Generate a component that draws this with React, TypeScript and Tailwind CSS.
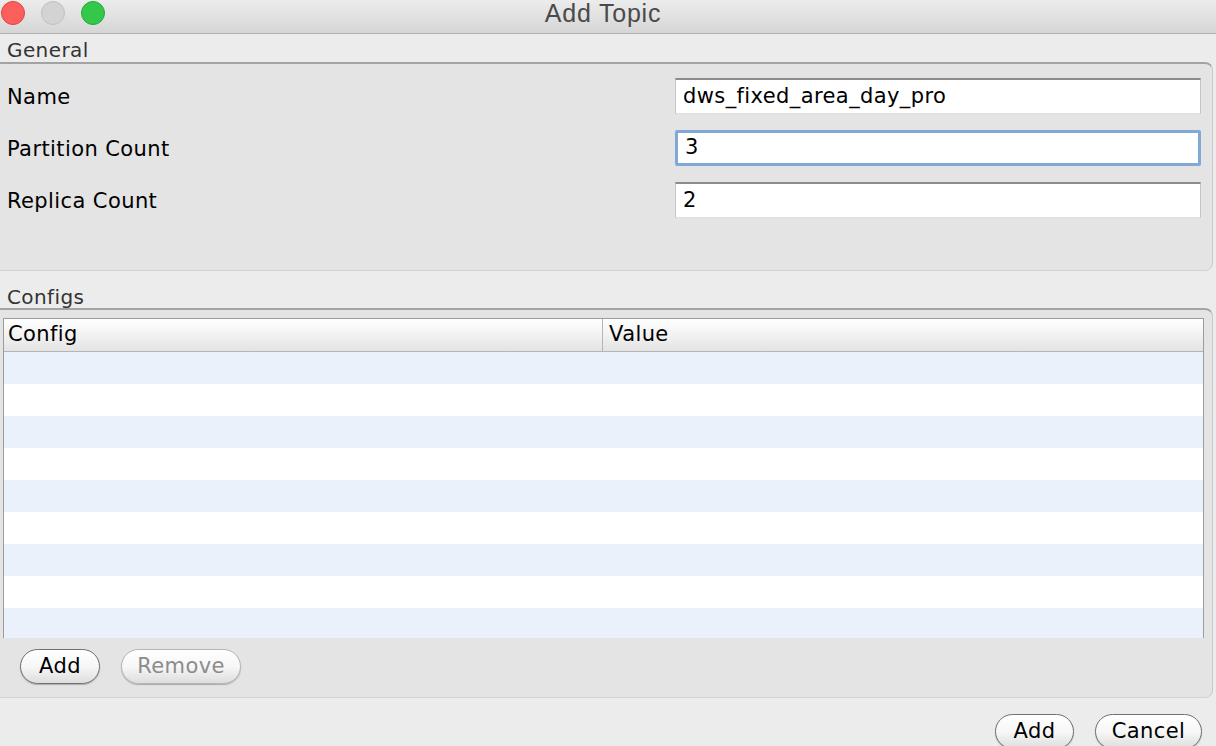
import React from "react";

const fields = [
  { label: "Name", value: "dws_fixed_area_day_pro", focused: false },
  { label: "Partition Count", value: "3", focused: true },
  { label: "Replica Count", value: "2", focused: false },
];

const rows = Array.from({ length: 9 }, (_, i) => i);

function PillButton({ label, disabled, width }: { label: string; disabled?: boolean; width: string }) {
  return (
    <button
      className={`${width} h-[35px] rounded-full border bg-gradient-to-b from-white via-[#f7f7f7] to-[#dedede] shadow-[0_1px_1px_rgba(0,0,0,0.25)] text-[21px] tracking-[0.4px] leading-none ${
        disabled ? "border-[#b4b4b4] text-[#8c8c8c]" : "border-[#707070] text-black"
      }`}
    >
      {label}
    </button>
  );
}

export default function App() {
  return (
    <div className="w-[1216px] h-[746px] overflow-hidden bg-[#ececec] font-['DejaVu_Sans',sans-serif] text-black tracking-[0.4px]">
      {/* Title bar */}
      <div className="relative h-[34px] border-b border-[#b1b1b1] bg-gradient-to-b from-[#ececec] to-[#d6d6d6] flex items-center justify-center">
        <div className="absolute left-[1px] top-[1px] flex gap-[16px]">
          <span className="w-[24px] h-[24px] rounded-full bg-[#fc605c] border border-[#e0443e]" />
          <span className="w-[24px] h-[24px] rounded-full bg-[#d3d3d3] border border-[#c0c0c0]" />
          <span className="w-[24px] h-[24px] rounded-full bg-[#34c84a] border border-[#25a83a]" />
        </div>
        <span className="font-['Liberation_Sans',sans-serif] text-[25px] tracking-[0.8px] text-[#4a4a4a] -mt-[5px] -ml-[10px]">Add Topic</span>
      </div>

      {/* General */}
      <div className="h-[28px] pl-[7px] pt-[1px] text-[20px] text-[#333]">General</div>
      <div className="mr-[3px] h-[209px] bg-[#e4e4e4] border-t-2 border-r border-b border-t-[#a3a3a3] border-r-[#c8c8c8] border-b-[#d2d2d2] rounded-tr-[8px] rounded-br-[8px] pt-[14px]">
        <div className="flex flex-col gap-[16px]">
          {fields.map((f) => (
            <div key={f.label} className="flex items-center h-[36px]">
              <span className="pl-[7px] pt-[4px] w-[675px] text-[21px]">{f.label}</span>
              <div
                className={`w-[526px] h-[36px] bg-white flex items-center pl-[7px] text-[21px] ${
                  f.focused
                    ? "border-[3px] border-[#82a8d6] rounded-[2px]"
                    : "border-t-2 border-x border-b border-t-[#8c8c8c] border-x-[#c4c4c4] border-b-[#dedede]"
                }`}
              >
                {f.value}
              </div>
            </div>
          ))}
        </div>
      </div>

      {/* Configs */}
      <div className="h-[37px] pl-[7px] pt-[11px] text-[20px] text-[#333]">Configs</div>
      <div className="mr-[3px] h-[390px] bg-[#e4e4e4] border-t-2 border-r border-b border-t-[#a3a3a3] border-r-[#c8c8c8] border-b-[#d2d2d2] rounded-tr-[8px] rounded-br-[8px] pt-[8px] pl-[3px] pr-[8px]">
        <div className="h-[320px] bg-white border-x border-t border-[#9c9c9c] overflow-hidden">
          <div className="flex h-[33px] border-b border-[#b5b5b5] bg-gradient-to-b from-white via-[#f2f2f2] to-[#e3e3e3] text-[21px]">
            <div className="w-[599px] border-r border-[#b5b5b5] pl-[4px] flex items-center">Config</div>
            <div className="flex-1 pl-[6px] flex items-center">Value</div>
          </div>
          {rows.map((i) => (
            <div key={i} className={`h-[32px] ${i % 2 === 0 ? "bg-[#ebf1fb]" : "bg-white"}`} />
          ))}
        </div>
        <div className="flex gap-[21px] pl-[17px] mt-[11px]">
          <PillButton label="Add" width="w-[80px]" />
          <PillButton label="Remove" width="w-[120px]" disabled />
        </div>
      </div>

      {/* Dialog buttons */}
      <div className="flex justify-end gap-[21px] pr-[14px] mt-[16px]">
        <PillButton label="Add" width="w-[79px]" />
        <PillButton label="Cancel" width="w-[107px]" />
      </div>
    </div>
  );
}
